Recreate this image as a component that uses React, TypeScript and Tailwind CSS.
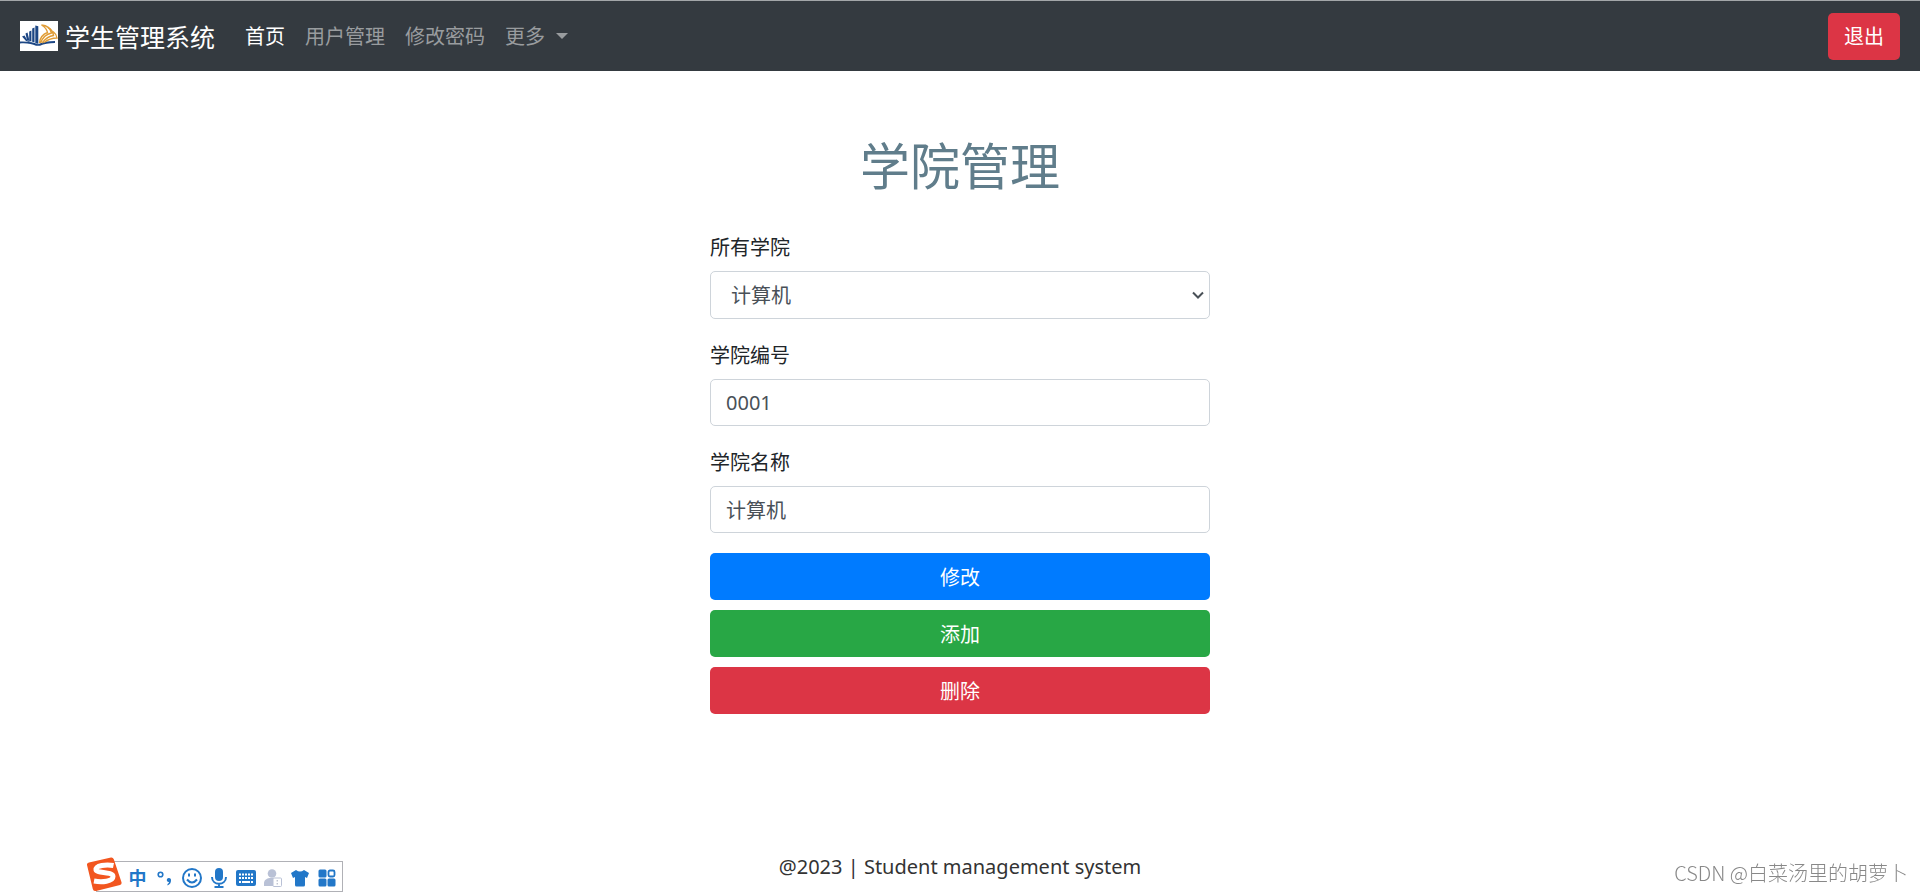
import type { ReactNode } from "react";

const collegeOptions = ["计算机"];

function BookLogo() {
  return (
    <svg viewBox="0 0 38 30" className="h-[30px] w-[38px] bg-white" aria-hidden="true">
      <g fill="#1c4684">
        <path d="M15.300 4.500l3 .8v17.700l-3-1z" />
        <path d="M12.200 7.500l2.300-1v15l-2.300-.8z" />
        <path d="M9.200 10.500l2.200-1v11l-2.200-.8z" />
        <path d="M5.500 12.500l2-1 2 8.500-2.500-.8z" />
        <path d="M2 15.500l2.500-1 3 5 6.500 3-8-2.500z" />
        <path d="M0 20.500c7-.3 13 .5 18 2.800 5-2.300 10-3.300 17-3.300v2c-6 0-11 1-15 2.800h-4c-4-1.800-9-2.800-16-2.300z" />
      </g>
      <g fill="none" stroke="#e09c35" strokeWidth="1.400">
        <path d="M19.500 22c.5-6 4-9 8-10.500-.5-3-2-5-6-7.500 6 .5 9 3.500 10 8-5 1-9 5-11 10" />
        <path d="M28 6.500c3 1.500 5 4 5.500 8-4 .5-8 3-11.500 7.500" />
        <path d="M33 10.500c2 1.500 3.500 3.500 4 6.500-4 0-9 1.500-13 4.500" />
      </g>
    </svg>
  );
}

function SogouLogo() {
  return (
    <svg viewBox="0 0 37 34" className="absolute bottom-0 -left-[11px] h-[34px] w-[37px]" aria-hidden="true">
      <path d="M3 5.500L25 .500q2-.3 2.800 1.700l7.700 23q.5 2-1.500 2.800L10 34q-2.500.3-3.200-2L1 8q-.3-2 2-2.500z" fill="#f2561f" />
      <path
        d="M27.500 8.500C20 7 9.500 8.500 10 13c.5 3.500 17 1.500 17 6.500 0 5-11 6-19 4.500"
        fill="none"
        stroke="#fff"
        strokeWidth="5"
      />
    </svg>
  );
}

function ToolButton({ label, children }: { label: string; children: ReactNode }) {
  return (
    <button type="button" aria-label={label} className="flex w-[27px] items-center justify-center pt-0.5">
      {children}
    </button>
  );
}

function InputToolbar() {
  return (
    <div className="fixed bottom-0 left-24 flex h-[31px] items-stretch border border-[#b0b1b6] bg-white pr-0.5 pl-[27px] text-[#2277c8]">
      <SogouLogo />
      <button type="button" className="w-[27px] text-center text-lg leading-7 font-bold">
        中
      </button>
      <ToolButton label="标点">
        <svg viewBox="0 0 20 20" className="size-5">
          <circle cx="5.500" cy="6.500" r="2.300" fill="none" stroke="currentColor" strokeWidth="1.600" />
          <path d="M13.500 10a2.300 2.300 0 0 1 2.500 2.500c0 2-1 4-3.500 5v-1.500c1-.6 1.500-1.200 1.500-2a2 2 0 0 1-.5-4z" fill="currentColor" />
        </svg>
      </ToolButton>
      <ToolButton label="表情">
        <svg viewBox="0 0 22 22" className="size-[22px]" fill="none" stroke="currentColor" strokeWidth="2">
          <circle cx="11" cy="11" r="9" />
          <path d="M8 6.500v3M14 6.500v3M6 12.500q5 6 10 0" />
        </svg>
      </ToolButton>
      <ToolButton label="语音">
        <svg viewBox="0 0 20 22" className="h-[22px] w-5">
          <rect x="6" y="1" width="8" height="13" rx="4" fill="currentColor" />
          <path d="M3 10c0 9 14 9 14 0M10 16.500v3.500M5.500 20h9" fill="none" stroke="currentColor" strokeWidth="2" />
        </svg>
      </ToolButton>
      <ToolButton label="键盘">
        <svg viewBox="0 0 20 16" className="h-4 w-5">
          <rect width="20" height="16" rx="2" fill="currentColor" />
          <path d="M3 4.500h14M3 8h14" stroke="#fff" strokeWidth="2" strokeDasharray="2 1" />
          <path d="M3 12h2M6 12h8M15 12h2" stroke="#fff" strokeWidth="2" />
        </svg>
      </ToolButton>
      <ToolButton label="用户">
        <svg viewBox="0 0 18 18" className="size-[18px]">
          <circle cx="8" cy="4.500" r="4.300" fill="#b9c1d6" />
          <path d="M0 17v-3c0-3 3-5 7-5h5v8z" fill="#b9c1d6" />
          <rect x="9" y="9" width="8.500" height="8.500" rx="1" fill="#fff" stroke="#b9c1d6" />
          <path d="M13.200 11v1.500M13.200 14v1.500" stroke="#a4aabc" />
        </svg>
      </ToolButton>
      <ToolButton label="皮肤">
        <svg viewBox="0 0 18 18" className="size-[18px]" fill="currentColor">
          <path d="M5 1q4 3 8 0l5 3-2 5-2-1v8q0 1.500-1.500 1.500h-7Q4 17.500 4 16V8L2 9 0 4z" />
        </svg>
      </ToolButton>
      <ToolButton label="工具箱">
        <svg viewBox="0 0 18 18" className="size-[18px]" fill="currentColor">
          <rect x=".5" y=".5" width="8" height="8" rx="1.500" />
          <rect x=".5" y="9.500" width="8" height="8" rx="1.500" />
          <rect x="9.500" y="9.500" width="8" height="8" rx="1.500" />
          <rect x="10.500" y="1.500" width="6" height="6" rx="1.500" fill="none" stroke="currentColor" strokeWidth="1.800" />
        </svg>
      </ToolButton>
    </div>
  );
}

const fieldClass =
  "block h-[47px] w-full rounded-[5px] border border-[#ced4da] bg-white px-[15px] font-['Noto_Sans','Noto_Sans_CJK_SC',sans-serif] text-xl text-[#495057]";
const labelClass = "mb-2 block leading-8";

export default function App() {
  return (
    <div className="flex min-h-screen flex-col bg-white font-['Noto_Sans_CJK_SC',sans-serif] text-xl text-[#212529]">
      <nav className="flex h-[71px] items-center border-t border-[#a3a6a9] bg-[#343a40] px-5">
        <a href="#" className="mr-5 flex items-center gap-[7px] text-[25px] leading-[38px] text-white">
          <BookLogo />
          学生管理系统
        </a>
        <div className="flex items-center leading-[30px] text-[#999c9f]">
          <a href="#" className="px-2.5 text-white">首页</a>
          <a href="#" className="px-2.5">用户管理</a>
          <a href="#" className="px-2.5">修改密码</a>
          <button type="button" className="flex items-center gap-[11px] px-2.5">
            更多
            <span className="border-x-[6px] border-t-[6px] border-x-transparent border-t-current" />
          </button>
        </div>
        <button type="button" className="ml-auto h-[47px] rounded-[5px] bg-[#dc3545] px-4 text-white">
          退出
        </button>
      </nav>

      <main className="mx-auto w-full max-w-[500px] pt-[62px]">
        <h1 className="mb-[38px] text-center text-[50px] leading-[60px] text-[#607d8b]">学院管理</h1>
        <form className="flex flex-col gap-5" onSubmit={(event) => event.preventDefault()}>
          <div>
            <label htmlFor="college" className={labelClass}>所有学院</label>
            <div className="relative">
              <select
                id="college"
                className="block h-12 w-full appearance-none rounded-[5px] border border-[#ced4da] bg-white px-5 text-xl text-[#495057]"
              >
                {collegeOptions.map((name) => (
                  <option key={name}>{name}</option>
                ))}
              </select>
              <svg
                viewBox="0 0 12 8"
                className="pointer-events-none absolute top-5 right-1.5 h-2 w-3"
                fill="none"
                stroke="#495057"
                strokeWidth="2"
                aria-hidden="true"
              >
                <path d="M1 1.500l5 5 5-5" />
              </svg>
            </div>
          </div>
          <div>
            <label htmlFor="college-id" className={labelClass}>学院编号</label>
            <input id="college-id" type="text" defaultValue="0001" className={fieldClass} />
          </div>
          <div>
            <label htmlFor="college-name" className={labelClass}>学院名称</label>
            <input id="college-name" type="text" defaultValue="计算机" className={fieldClass} />
          </div>
          <div className="flex flex-col gap-2.5 text-white">
            <button type="submit" className="h-[47px] rounded-[5px] bg-[#007bff]">修改</button>
            <button type="button" className="h-[47px] rounded-[5px] bg-[#28a745]">添加</button>
            <button type="button" className="h-[47px] rounded-[5px] bg-[#dc3545]">删除</button>
          </div>
        </form>
      </main>

      <footer className="mt-auto pb-2.5 text-center font-['Noto_Sans',sans-serif] leading-[30px] text-[#333]">
        @2023 | Student management system
      </footer>

      <InputToolbar />
      <p className="fixed right-3 bottom-1 text-xl leading-[30px] font-light text-[#888]">
        CSDN @白菜汤里的胡萝卜
      </p>
    </div>
  );
}
